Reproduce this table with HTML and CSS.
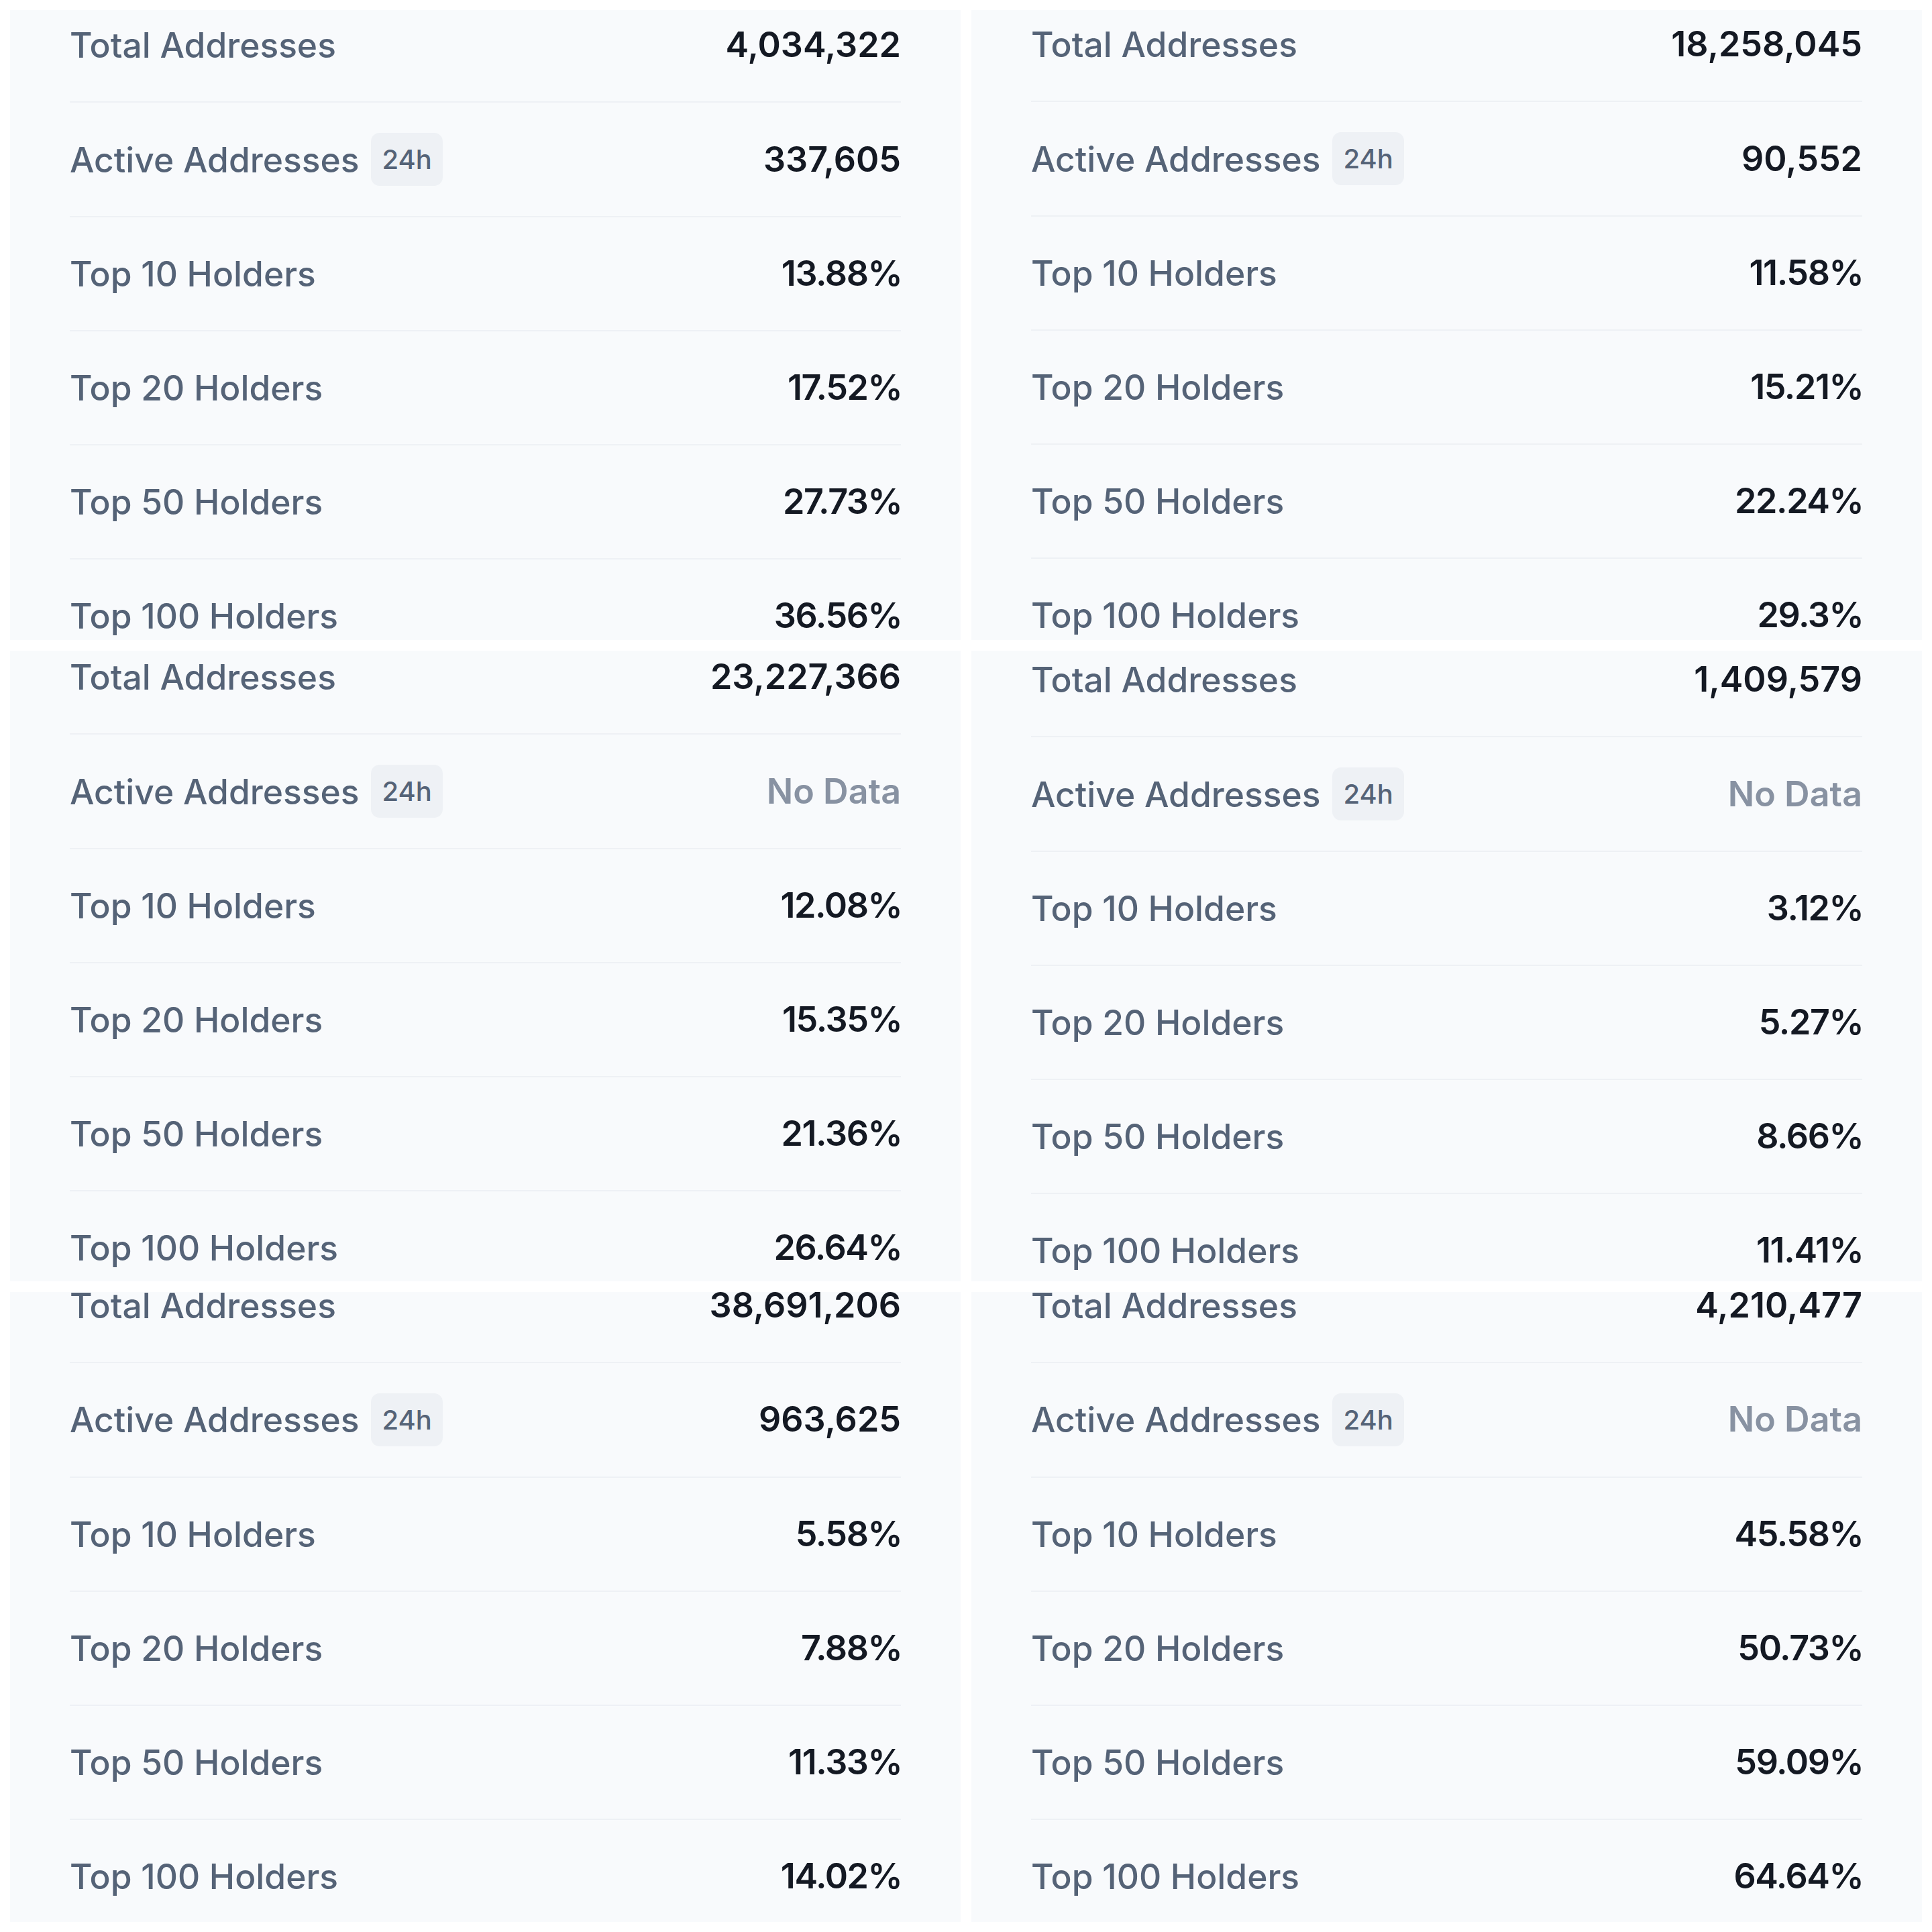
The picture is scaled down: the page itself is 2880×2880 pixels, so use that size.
FILE: index.html
```html
<!DOCTYPE html>
<html lang="en">
<head>
<meta charset="utf-8">
<title>Holder statistics</title>
<link rel="stylesheet" href="styles.css">
</head>
<body>
<main class="board">
  <section class="panel panel--a">
    <ul class="stats">
      <li class="row"><span class="label">Total Addresses</span><span class="value">4,034,322</span></li>
      <li class="row"><span class="label">Active Addresses <span class="badge">24h</span></span><span class="value">337,605</span></li>
      <li class="row"><span class="label">Top 10 Holders</span><span class="value value--pct">13.88%</span></li>
      <li class="row"><span class="label">Top 20 Holders</span><span class="value value--pct">17.52%</span></li>
      <li class="row"><span class="label">Top 50 Holders</span><span class="value value--pct">27.73%</span></li>
      <li class="row"><span class="label">Top 100 Holders</span><span class="value value--pct">36.56%</span></li>
    </ul>
  </section>
  <section class="panel panel--b">
    <ul class="stats">
      <li class="row"><span class="label">Total Addresses</span><span class="value">18,258,045</span></li>
      <li class="row"><span class="label">Active Addresses <span class="badge">24h</span></span><span class="value">90,552</span></li>
      <li class="row"><span class="label">Top 10 Holders</span><span class="value value--pct">11.58%</span></li>
      <li class="row"><span class="label">Top 20 Holders</span><span class="value value--pct">15.21%</span></li>
      <li class="row"><span class="label">Top 50 Holders</span><span class="value value--pct">22.24%</span></li>
      <li class="row"><span class="label">Top 100 Holders</span><span class="value value--pct">29.3%</span></li>
    </ul>
  </section>
  <section class="panel panel--c">
    <ul class="stats">
      <li class="row"><span class="label">Total Addresses</span><span class="value">23,227,366</span></li>
      <li class="row"><span class="label">Active Addresses <span class="badge">24h</span></span><span class="value value--empty">No Data</span></li>
      <li class="row"><span class="label">Top 10 Holders</span><span class="value value--pct">12.08%</span></li>
      <li class="row"><span class="label">Top 20 Holders</span><span class="value value--pct">15.35%</span></li>
      <li class="row"><span class="label">Top 50 Holders</span><span class="value value--pct">21.36%</span></li>
      <li class="row"><span class="label">Top 100 Holders</span><span class="value value--pct">26.64%</span></li>
    </ul>
  </section>
  <section class="panel panel--d">
    <ul class="stats">
      <li class="row"><span class="label">Total Addresses</span><span class="value">1,409,579</span></li>
      <li class="row"><span class="label">Active Addresses <span class="badge">24h</span></span><span class="value value--empty">No Data</span></li>
      <li class="row"><span class="label">Top 10 Holders</span><span class="value value--pct">3.12%</span></li>
      <li class="row"><span class="label">Top 20 Holders</span><span class="value value--pct">5.27%</span></li>
      <li class="row"><span class="label">Top 50 Holders</span><span class="value value--pct">8.66%</span></li>
      <li class="row"><span class="label">Top 100 Holders</span><span class="value value--pct">11.41%</span></li>
    </ul>
  </section>
  <section class="panel panel--e">
    <ul class="stats">
      <li class="row"><span class="label">Total Addresses</span><span class="value">38,691,206</span></li>
      <li class="row"><span class="label">Active Addresses <span class="badge">24h</span></span><span class="value">963,625</span></li>
      <li class="row"><span class="label">Top 10 Holders</span><span class="value value--pct">5.58%</span></li>
      <li class="row"><span class="label">Top 20 Holders</span><span class="value value--pct">7.88%</span></li>
      <li class="row"><span class="label">Top 50 Holders</span><span class="value value--pct">11.33%</span></li>
      <li class="row"><span class="label">Top 100 Holders</span><span class="value value--pct">14.02%</span></li>
    </ul>
  </section>
  <section class="panel panel--f">
    <ul class="stats">
      <li class="row"><span class="label">Total Addresses</span><span class="value">4,210,477</span></li>
      <li class="row"><span class="label">Active Addresses <span class="badge">24h</span></span><span class="value value--empty">No Data</span></li>
      <li class="row"><span class="label">Top 10 Holders</span><span class="value value--pct">45.58%</span></li>
      <li class="row"><span class="label">Top 20 Holders</span><span class="value value--pct">50.73%</span></li>
      <li class="row"><span class="label">Top 50 Holders</span><span class="value value--pct">59.09%</span></li>
      <li class="row"><span class="label">Top 100 Holders</span><span class="value value--pct">64.64%</span></li>
    </ul>
  </section>
</main>
</body>
</html>
```

FILE: styles.css
```css
* {
  box-sizing: border-box;
}

html,
body {
  margin: 0;
  padding: 0;
  background: #ffffff;
}

body {
  font-family: Inter, "Noto Sans", "Liberation Sans", sans-serif;
}

.board {
  width: 2880px;
  height: 2880px;
  padding: 15px;
  display: grid;
  grid-template-columns: 1fr 1fr;
  grid-template-rows: 1fr 1fr 1fr;
  gap: 16px;
}

.panel {
  background: #f8fafc;
  overflow: hidden;
  padding: 0 89px 0 89px;
  min-height: 0;
}

.stats {
  list-style: none;
  margin: 0;
  padding: 0;
}

.panel--a .stats { margin-top: -32px; }
.panel--b .stats { margin-top: -33px; }
.panel--c .stats { margin-top: -45px; }
.panel--d .stats { margin-top: -41px; }
.panel--e .stats { margin-top: -64px; }
.panel--f .stats { margin-top: -64px; }

.row {
  display: flex;
  align-items: center;
  justify-content: space-between;
  padding: 45px 0 45px;
  border-bottom: 2px solid #eef1f5;
  font-size: 52px;
  line-height: 78px;
}

.row:last-child {
  border-bottom: 0;
}

.label {
  display: flex;
  align-items: center;
  color: #556377;
  font-size: 51.5px;
  font-weight: 500;
}

.badge {
  display: inline-block;
  margin-left: 18px;
  padding: 0 16px;
  height: 79px;
  line-height: 79px;
  font-size: 40px;
  font-weight: 500;
  color: #556377;
  background: #eef1f5;
  border-radius: 13px;
}

.value {
  color: #141923;
  font-weight: 600;
}

.value--pct {
  letter-spacing: -1.4px;
  margin-right: -1.4px;
}

.value--empty {
  color: #8892a2;
  font-weight: 600;
}
```
